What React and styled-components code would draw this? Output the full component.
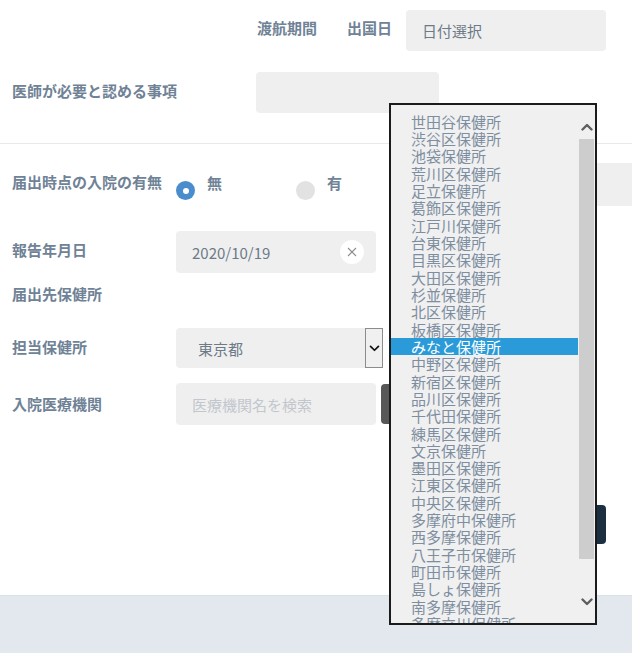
import React from "react";
import styled, { createGlobalStyle } from "styled-components";

const GlobalStyle = createGlobalStyle`
  html, body { margin: 0; padding: 0; background: #ffffff; }
  body { font-family: "Noto Sans CJK JP", "Noto Sans", sans-serif; }
  * { box-sizing: border-box; }
`;

const Page = styled.div`
  position: relative;
  width: 632px;
  height: 653px;
  overflow: hidden;
  background: #ffffff;
  padding-top: 10px;
`;

const TopRow = styled.div`
  display: flex;
  justify-content: flex-end;
  align-items: flex-start;
  padding-right: 26px;
  height: 41px;
`;

const TopLabel = styled.div`
  font-size: 15px;
  font-weight: 700;
  line-height: 22px;
  color: #6f8296;
  margin-top: 7px;
  margin-right: ${(p) => p.$mr}px;
`;

const Row = styled.div`
  display: flex;
  align-items: flex-start;
  padding-left: 12px;
  margin-top: ${(p) => p.$mt}px;
  height: ${(p) => p.$h}px;
`;

const Label = styled.div`
  width: ${(p) => p.$w || 164}px;
  flex-shrink: 0;
  font-size: 15px;
  font-weight: 700;
  line-height: 22px;
  color: #6f8296;
  padding-top: ${(p) => (p.$pt === undefined ? 8 : p.$pt)}px;
`;

const Field = styled.div`
  width: ${(p) => p.$w || 200}px;
  height: ${(p) => p.$h || 41}px;
  flex-shrink: 0;
  background: #efefef;
  border-radius: ${(p) => p.$radius || "4px"};
  display: flex;
  align-items: center;
  justify-content: space-between;
  padding: 0 12px 0 ${(p) => p.$pl || 16}px;
  font-size: 15px;
  color: ${(p) => (p.$placeholder ? "#c2c7cd" : "#6d7a88")};
`;

const Divider = styled.div`
  height: 1px;
  margin-top: 30px;
  background: #e9e9e9;
`;

const RadioOption = styled.div`
  display: flex;
  align-items: flex-start;
  width: ${(p) => p.$w}px;
  flex-shrink: 0;
`;

const RadioDot = styled.span`
  width: 19px;
  height: 19px;
  border-radius: 50%;
  margin-top: 18px;
  flex-shrink: 0;
  background: ${(p) => (p.$checked ? "#4a8dcc" : "#e2e2e2")};
  display: flex;
  align-items: center;
  justify-content: center;
  &::after {
    content: "";
    width: 6px;
    height: 6px;
    border-radius: 50%;
    background: ${(p) => (p.$checked ? "#ffffff" : "transparent")};
  }
`;

const RadioText = styled.span`
  margin-left: 12px;
  padding-top: 9px;
  font-size: 15px;
  font-weight: 700;
  line-height: 22px;
  color: #6f8296;
`;

const SideBox = styled.div`
  margin-left: auto;
  width: 200px;
  height: 43px;
  background: #efefef;
  border-radius: 4px 0 0 4px;
`;

const ClearButton = styled.span`
  width: 24px;
  height: 24px;
  border-radius: 50%;
  background: #ffffff;
  display: flex;
  align-items: center;
  justify-content: center;
`;

const SelectWrap = styled.div`
  display: flex;
  align-items: stretch;
  height: 40px;
`;

const SelectArrow = styled.div`
  width: 18px;
  background: #f0f0f0;
  border: 1px solid #8c8c8c;
  display: flex;
  align-items: center;
  justify-content: center;
`;

const SearchButton = styled.div`
  width: 60px;
  height: 40px;
  margin-left: 5px;
  margin-top: 1px;
  background: #575757;
  border-radius: 4px;
`;

const ButtonRow = styled.div`
  display: flex;
  justify-content: flex-end;
  padding-right: 26px;
  margin-top: 80px;
  height: 39px;
`;

const PrimaryButton = styled.div`
  width: 110px;
  height: 39px;
  background: #1c2f40;
  border-radius: 4px;
`;

const Footer = styled.div`
  margin-top: 51px;
  height: 58px;
  background: #e3e8ef;
  border-top: 1px solid #dbe1e8;
`;

const Dropdown = styled.div`
  position: absolute;
  left: 389px;
  top: 103px;
  width: 208px;
  height: 522px;
  border: 2px solid #1b1b1b;
  background: #f0f0f0;
  display: flex;
`;

const OptionList = styled.div`
  flex: 1;
  overflow: hidden;
  padding-top: 7.6px;
`;

const Option = styled.div`
  height: 17.33px;
  line-height: 17.33px;
  padding-left: 20px;
  font-size: 15px;
  white-space: nowrap;
  color: ${(p) => (p.$selected ? "#ffffff" : "#7d8ea0")};
  background: ${(p) => (p.$selected ? "#2a9bd8" : "transparent")};
`;

const Scrollbar = styled.div`
  width: 17px;
  flex-shrink: 0;
  display: flex;
  flex-direction: column;
  align-items: center;
  padding: 13px 0 13px;
`;

const ScrollArrow = styled.div`
  height: 17px;
  width: 17px;
  display: flex;
  align-items: center;
  justify-content: center;
`;

const ScrollThumb = styled.div`
  width: 15px;
  height: 420px;
  margin-top: 4px;
  background: #cdcdcd;
`;

const Spacer = styled.div`
  flex: 1;
`;

const Chevron = ({ up, color = "#5f5f5f", w = 12, h = 8, sw = 2.4 }) => (
  <svg width={w} height={h} viewBox="0 0 12 8">
    <polyline
      points={up ? "1.5,6.5 6,2 10.5,6.5" : "1.5,1.5 6,6 10.5,1.5"}
      fill="none"
      stroke={color}
      strokeWidth={sw}
      strokeLinecap="round"
      strokeLinejoin="round"
    />
  </svg>
);

const offices = [
  "世田谷保健所",
  "渋谷区保健所",
  "池袋保健所",
  "荒川区保健所",
  "足立保健所",
  "葛飾区保健所",
  "江戸川保健所",
  "台東保健所",
  "目黒区保健所",
  "大田区保健所",
  "杉並保健所",
  "北区保健所",
  "板橋区保健所",
  "みなと保健所",
  "中野区保健所",
  "新宿区保健所",
  "品川区保健所",
  "千代田保健所",
  "練馬区保健所",
  "文京保健所",
  "墨田区保健所",
  "江東区保健所",
  "中央区保健所",
  "多摩府中保健所",
  "西多摩保健所",
  "八王子市保健所",
  "町田市保健所",
  "島しょ保健所",
  "南多摩保健所",
  "多摩立川保健所",
];

export default function App() {
  return (
    <>
      <GlobalStyle />
      <Page>
        <TopRow>
          <TopLabel $mr={30}>渡航期間</TopLabel>
          <TopLabel $mr={14}>出国日</TopLabel>
          <Field $w={200} $h={41}>日付選択</Field>
        </TopRow>

        <Row $mt={21} $h={41}>
          <Label $w={244}>医師が必要と認める事項</Label>
          <Field $w={183} $h={41} />
        </Row>

        <Divider />

        <Row $mt={19} $h={43}>
          <Label>届出時点の入院の有無</Label>
          <RadioOption $w={120}>
            <RadioDot $checked />
            <RadioText>無</RadioText>
          </RadioOption>
          <RadioOption $w={60}>
            <RadioDot />
            <RadioText>有</RadioText>
          </RadioOption>
          <SideBox />
        </Row>

        <Row $mt={25} $h={42}>
          <Label>報告年月日</Label>
          <Field $w={200} $h={42}>
            2020/10/19
            <ClearButton>
              <svg width="12" height="12" viewBox="0 0 12 12">
                <path d="M2 2 L10 10 M10 2 L2 10" stroke="#8a8f95" strokeWidth="1.1" />
              </svg>
            </ClearButton>
          </Field>
        </Row>

        <Row $mt={10} $h={22}>
          <Label $pt={0}>届出先保健所</Label>
        </Row>

        <Row $mt={23} $h={40}>
          <Label>担当保健所</Label>
          <SelectWrap>
            <Field $w={189} $h={40} $pl={22} $radius="4px 0 0 4px">東京都</Field>
            <SelectArrow>
              <Chevron color="#111111" w={11} h={7} sw={2} />
            </SelectArrow>
          </SelectWrap>
        </Row>

        <Row $mt={15} $h={42}>
          <Label $pt={10}>入院医療機関</Label>
          <Field $w={200} $h={42} $placeholder>医療機関名を検索</Field>
          <SearchButton />
        </Row>

        <ButtonRow>
          <PrimaryButton />
        </ButtonRow>

        <Footer />

        <Dropdown>
          <OptionList>
            {offices.map((name) => (
              <Option key={name} $selected={name === "みなと保健所"}>
                {name}
              </Option>
            ))}
          </OptionList>
          <Scrollbar>
            <ScrollArrow>
              <Chevron up />
            </ScrollArrow>
            <ScrollThumb />
            <Spacer />
            <ScrollArrow>
              <Chevron />
            </ScrollArrow>
          </Scrollbar>
        </Dropdown>
      </Page>
    </>
  );
}
